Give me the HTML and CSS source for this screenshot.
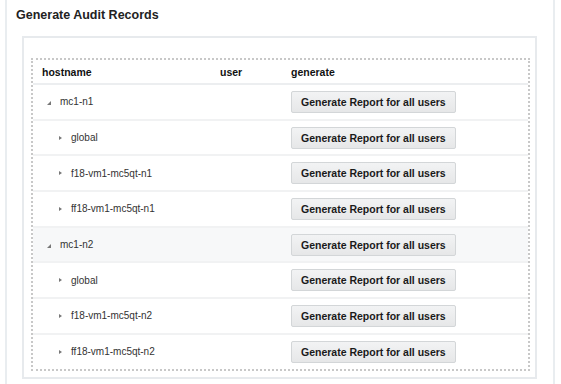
FILE: index.html
```html
<!DOCTYPE html>
<html lang="en">
<head>
  <meta charset="UTF-8">
  <meta name="viewport" content="width=device-width, initial-scale=1.0">
  <title>Generate Audit Records</title>
  <link rel="stylesheet" href="styles.css">
</head>
<body>
  <div class="panel">
    <h2 class="panel-title">Generate Audit Records</h2>

    <div class="panel-body">
      <div class="tree-frame">
        <table class="tree-table">
          <thead>
            <tr>
              <th class="col-host">hostname</th>
              <th class="col-user">user</th>
              <th>generate</th>
            </tr>
          </thead>
          <tbody>
            <tr>
              <td><div class="node"><span class="twisty"><span class="tri-open"></span></span>mc1-n1</div></td>
              <td></td>
              <td><button class="gen-btn">Generate Report for all users</button></td>
            </tr>
            <tr>
              <td><div class="node child"><span class="twisty"><span class="tri-closed"></span></span>global</div></td>
              <td></td>
              <td><button class="gen-btn">Generate Report for all users</button></td>
            </tr>
            <tr>
              <td><div class="node child"><span class="twisty"><span class="tri-closed"></span></span>f18-vm1-mc5qt-n1</div></td>
              <td></td>
              <td><button class="gen-btn">Generate Report for all users</button></td>
            </tr>
            <tr>
              <td><div class="node child"><span class="twisty"><span class="tri-closed"></span></span>ff18-vm1-mc5qt-n1</div></td>
              <td></td>
              <td><button class="gen-btn">Generate Report for all users</button></td>
            </tr>
            <tr class="hover">
              <td><div class="node"><span class="twisty"><span class="tri-open"></span></span>mc1-n2</div></td>
              <td></td>
              <td><button class="gen-btn">Generate Report for all users</button></td>
            </tr>
            <tr>
              <td><div class="node child"><span class="twisty"><span class="tri-closed"></span></span>global</div></td>
              <td></td>
              <td><button class="gen-btn">Generate Report for all users</button></td>
            </tr>
            <tr>
              <td><div class="node child"><span class="twisty"><span class="tri-closed"></span></span>f18-vm1-mc5qt-n2</div></td>
              <td></td>
              <td><button class="gen-btn">Generate Report for all users</button></td>
            </tr>
            <tr>
              <td><div class="node child"><span class="twisty"><span class="tri-closed"></span></span>ff18-vm1-mc5qt-n2</div></td>
              <td></td>
              <td><button class="gen-btn">Generate Report for all users</button></td>
            </tr>
          </tbody>
        </table>
      </div>
    </div>
  </div>
</body>
</html>
```

FILE: styles.css
```css
body {
  margin: 0;
  font-family: 'Liberation Sans', Arial, sans-serif;
  background-color: #fff;
  color: #333;
  overflow: hidden;
}
.panel {
  margin: 0 6px 0 5px;
  border-left: 2px solid #e9edf0;
  border-right: 2px solid #e9edf0;
  padding-bottom: 20px;
}
.panel-title {
  margin: 0;
  padding: 6px 0 0 9px;
  font-size: 12.5px;
  line-height: 18px;
  font-weight: bold;
  color: #222;
}
.panel-body {
  margin: 12px 16px 0 15px;
  border: 2px solid #e7eaed;
  padding: 20px 5px 6px 7px;
}
.tree-frame {
  border: 2px dotted #c8c8c8;
}
.tree-table {
  width: 100%;
  border-collapse: collapse;
  table-layout: fixed;
}
.tree-table th {
  text-align: left;
  font-size: 10.5px;
  font-weight: bold;
  color: #111;
  height: 23px;
  padding: 0 0 0 9px;
  border-bottom: 2px solid #eceef0;
}
.col-host {
  width: 169px;
}
.col-user {
  width: 62px;
}
.tree-table td {
  height: 33.7px;
  padding: 0 0 0 9px;
  font-size: 10px;
  color: #333;
  border-bottom: 2px solid #f1f2f3;
}
.tree-table tbody tr:last-child td {
  border-bottom: none;
}
.tree-table tr.hover td {
  background-color: #f7f8f9;
}
.node {
  display: flex;
  align-items: center;
  padding-left: 5px;
}
.node.child {
  padding-left: 17px;
}
.twisty {
  display: inline-flex;
  align-items: center;
  width: 13px;
  height: 10px;
}
.node.child .twisty {
  width: 12px;
}
.tri-open {
  width: 0;
  height: 0;
  border-left: 4px solid transparent;
  border-bottom: 4px solid #777;
  margin-top: 2px;
}
.tri-closed {
  width: 0;
  height: 0;
  border-left: 3px solid #777;
  border-top: 2.5px solid transparent;
  border-bottom: 2.5px solid transparent;
}
.gen-btn {
  height: 22px;
  padding: 0 9px;
  font-family: 'Liberation Sans', Arial, sans-serif;
  font-size: 10.5px;
  font-weight: bold;
  color: #1a1a1a;
  background: linear-gradient(#f2f3f4, #e6e7e8);
  border: 1px solid #d3d6d8;
  border-radius: 2px;
  cursor: pointer;
}
```
